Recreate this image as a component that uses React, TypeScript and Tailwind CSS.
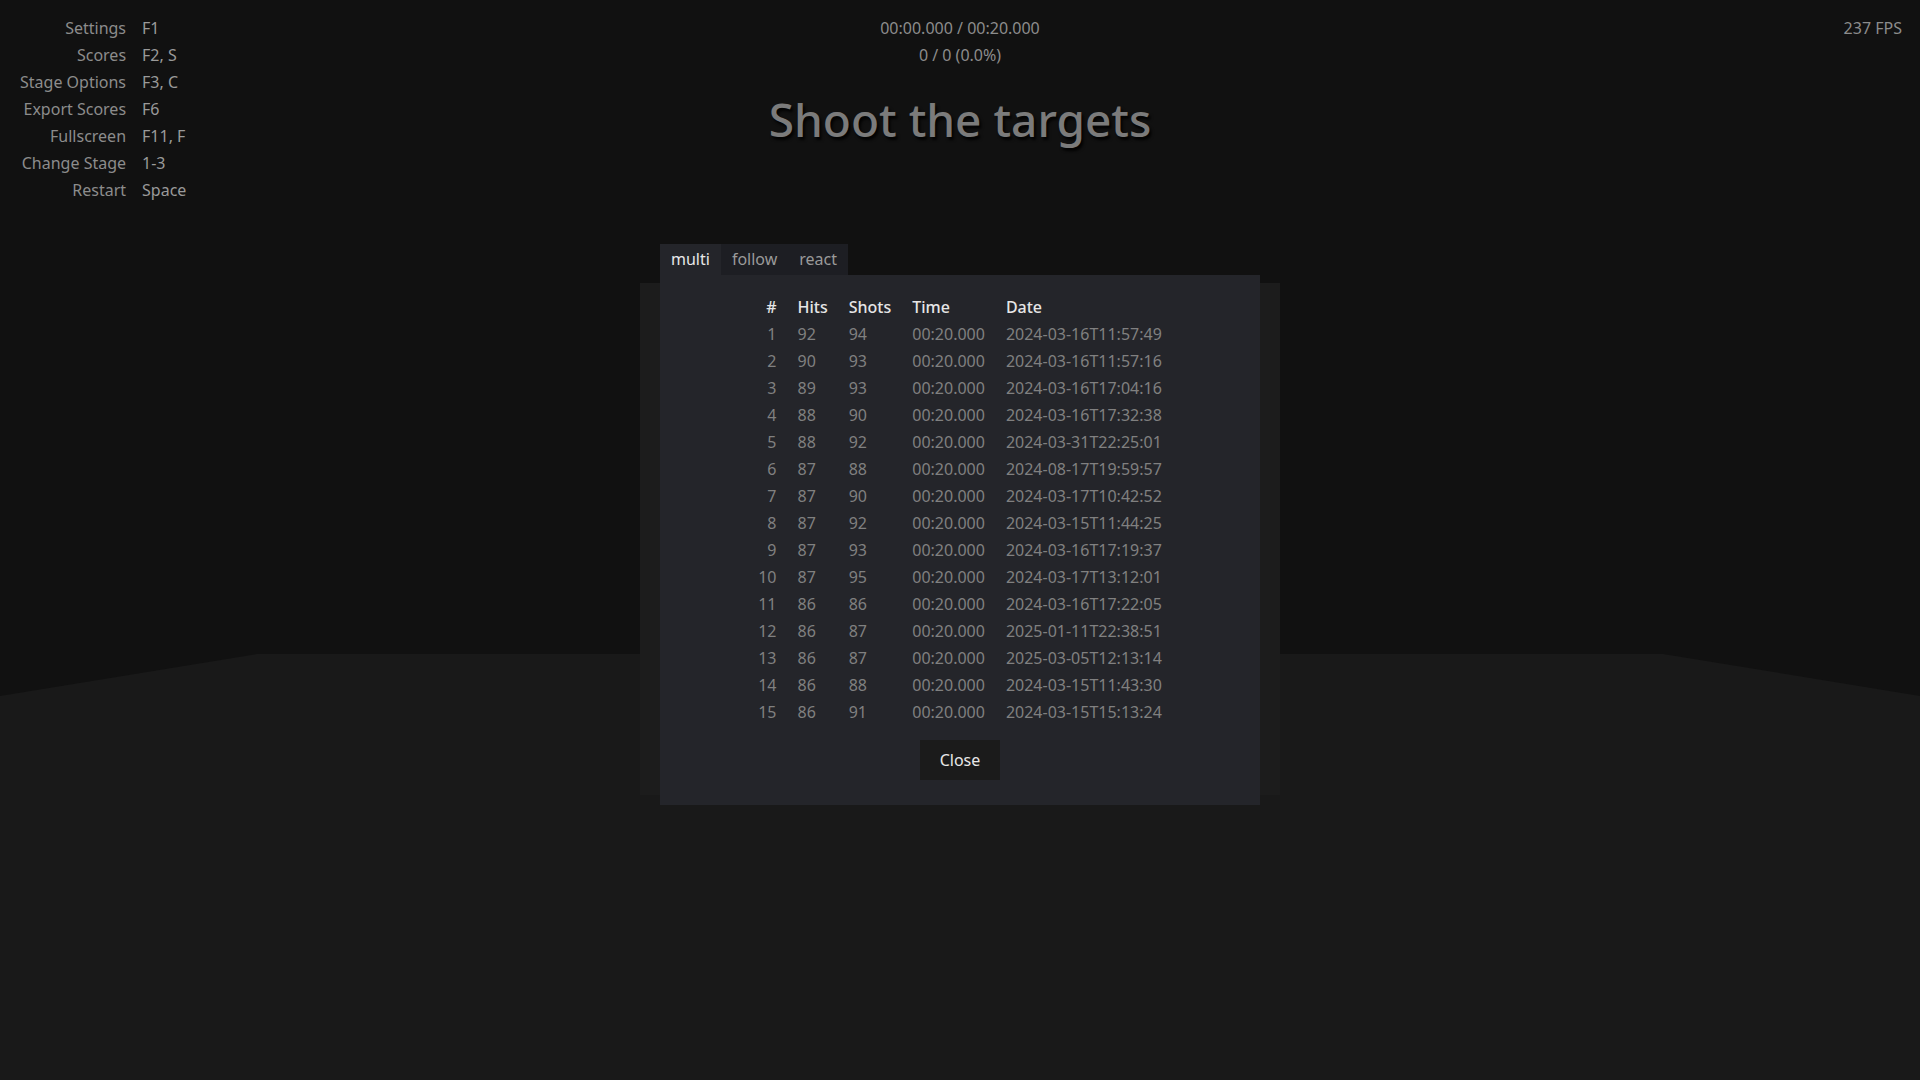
import { useState } from "react";

// Aim trainer — scores overlay

const shortcuts: [string, string][] = [
  ["Settings", "F1"],
  ["Scores", "F2, S"],
  ["Stage Options", "F3, C"],
  ["Export Scores", "F6"],
  ["Fullscreen", "F11, F"],
  ["Change Stage", "1-3"],
  ["Restart", "Space"],
];

const scores: [number, number, number, string][] = [
  [1, 92, 94, "2024-03-16T11:57:49"],
  [2, 90, 93, "2024-03-16T11:57:16"],
  [3, 89, 93, "2024-03-16T17:04:16"],
  [4, 88, 90, "2024-03-16T17:32:38"],
  [5, 88, 92, "2024-03-31T22:25:01"],
  [6, 87, 88, "2024-08-17T19:59:57"],
  [7, 87, 90, "2024-03-17T10:42:52"],
  [8, 87, 92, "2024-03-15T11:44:25"],
  [9, 87, 93, "2024-03-16T17:19:37"],
  [10, 87, 95, "2024-03-17T13:12:01"],
  [11, 86, 86, "2024-03-16T17:22:05"],
  [12, 86, 87, "2025-01-11T22:38:51"],
  [13, 86, 87, "2025-03-05T12:13:14"],
  [14, 86, 88, "2024-03-15T11:43:30"],
  [15, 86, 91, "2024-03-15T15:13:24"],
];

const tabs = ["multi", "follow", "react"];

function Scene() {
  return (
    <svg className="absolute inset-0 h-full w-full" viewBox="0 0 1920 1080" preserveAspectRatio="none">
      <rect x="0" y="0" width="1920" height="1080" fill="#111111" />
      <polygon points="0,696 257,654 1663,654 1920,696 1920,1080 0,1080" fill="#191919" />
      <rect x="640" y="283" width="640" height="512" fill="#1c1c1c" />
    </svg>
  );
}

export default function App() {
  const [tab, setTab] = useState("multi");

  return (
    <div className="relative h-screen w-full overflow-hidden bg-[#111111] font-['Noto_Sans',sans-serif] text-base leading-[27px]">
      <Scene />

      <div className="relative grid grid-cols-[1fr_auto_1fr] pt-[15px]">
        <div className="grid grid-cols-[auto_auto] justify-start gap-x-4 pl-5">
          {shortcuts.map(([label, key]) => (
            <div key={label} className="contents">
              <span className="text-right text-[#8c8c8c]">{label}</span>
              <span className="text-[#9a9a9a]">{key}</span>
            </div>
          ))}
        </div>

        <div className="flex flex-col items-center text-[#8c8c8c]">
          <span>00:00.000 / 00:20.000</span>
          <span>0 / 0 (0.0%)</span>
          <h1 className="mt-[20px] text-[46px] leading-[60px] font-medium text-[#7b7b7b] [text-shadow:2px_3px_3px_rgba(0,0,0,0.9)]">
            Shoot the targets
          </h1>
        </div>

        <div className="pr-[18px] text-right text-[#8c8c8c]">237 FPS</div>
      </div>

      <div className="absolute inset-x-0 top-[244px] flex justify-center">
        <div className="flex w-[600px] flex-col">
          <div className="flex self-start bg-[#1d1e23]">
            {tabs.map((t) => (
              <button
                key={t}
                type="button"
                onClick={() => setTab(t)}
                className={
                  t === tab
                    ? "h-[31px] bg-[#24252a] px-[11px] text-[#e8e8e8]"
                    : "h-[31px] px-[11px] text-[#9a9a9a]"
                }
              >
                {t}
              </button>
            ))}
          </div>

          <div className="flex h-[530px] flex-col items-center bg-[#24252a] pt-[19px]">
            <table className="border-collapse">
              <thead>
                <tr className="text-[#e6e6e6]">
                  <th className="px-[10.5px] py-0 text-right font-medium">#</th>
                  <th className="px-[10.5px] py-0 text-left font-medium">Hits</th>
                  <th className="px-[10.5px] py-0 text-left font-medium">Shots</th>
                  <th className="px-[10.5px] py-0 text-left font-medium">Time</th>
                  <th className="px-[10.5px] py-0 text-left font-medium">Date</th>
                </tr>
              </thead>
              <tbody className="text-[#808080]">
                {scores.map(([n, hits, shots, date]) => (
                  <tr key={n}>
                    <td className="px-[10.5px] text-right">{n}</td>
                    <td className="px-[10.5px]">{hits}</td>
                    <td className="px-[10.5px]">{shots}</td>
                    <td className="px-[10.5px]">00:20.000</td>
                    <td className="px-[10.5px]">{date}</td>
                  </tr>
                ))}
              </tbody>
            </table>

            <button type="button" className="mt-[14px] h-10 w-20 bg-[#1b1b1b] text-[#e8e8e8]">
              Close
            </button>
          </div>
        </div>
      </div>
    </div>
  );
}
